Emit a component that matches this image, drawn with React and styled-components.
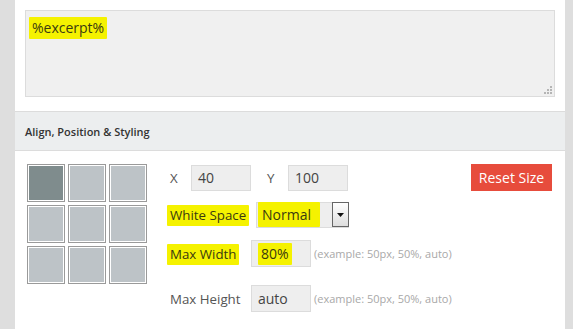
import React from "react";
import styled, { createGlobalStyle } from "styled-components";

const Global = createGlobalStyle`
  html, body { margin: 0; padding: 0; background: #dedede; }
  body { font-family: "Open Sans", "Liberation Sans", sans-serif; font-size: 13px; color: #555; }
`;

const Page = styled.div`
  display: flex;
  width: 573px;
  height: 329px;
  overflow: hidden;
  background: #dedede;
`;

const Panel = styled.div`
  margin-left: 15px;
  width: 550px;
  background: #fff;
  display: flex;
  flex-direction: column;
`;

const TextWrap = styled.div`
  padding: 10px 10px 14px 10px;
`;

const TextBox = styled.div`
  position: relative;
  height: 87px;
  background: #f0f0f0;
  border: 1px solid #dcdcdc;
  padding: 7px 3px;
  box-sizing: border-box;
  font-size: 14px;
  color: #333;
`;

const Grip = styled.svg`
  position: absolute;
  right: 2px;
  bottom: 2px;
`;

const Mark = styled.span`
  background: #f5f200;
  padding: 1px 3px 2px 3px;
  border-radius: 1px;
  color: #3a3a10;
`;

const Header = styled.div`
  height: 38px;
  border-top: 1px solid #dcdcdc;
  border-bottom: 1px solid #dcdcdc;
  background: #eceeef;
  display: flex;
  align-items: center;
  padding-left: 10px;
  font-size: 11px;
  font-weight: 600;
  color: #333;
`;

const Body = styled.div`
  display: flex;
  padding: 13px 13px 0 12px;
  gap: 20px;
`;

const Grid = styled.div`
  display: grid;
  grid-template-columns: repeat(3, 38px);
  grid-auto-rows: 38px;
  gap: 3px;
  align-self: flex-start;
`;

const Cell = styled.div`
  box-sizing: border-box;
  border: 1px solid #9a9a9a;
  box-shadow: inset 0 0 0 1px #fff;
  background: ${(p) => (p.$active ? "#7f8c8d" : "#bdc3c7")};
`;

const Controls = styled.div`
  flex: 1;
  display: flex;
  flex-direction: column;
`;

const Row = styled.div`
  display: flex;
  align-items: center;
  height: 27px;
  margin-top: ${(p) => p.$mt || 0}px;
`;

const Label = styled.span`
  width: ${(p) => p.$w}px;
  flex: none;
  padding-left: 3px;
  box-sizing: border-box;
  white-space: nowrap;
  font-size: 13.3px;
  & > span { margin-left: -3px; }
`;

const Input = styled.div`
  width: 60px;
  height: ${(p) => p.$h || 26}px;
  box-sizing: border-box;
  background: #eeeeee;
  border: 1px solid #dcdcdc;
  display: flex;
  align-items: center;
  padding-left: 6px;
  font-size: 14px;
  color: #444;
  flex: none;
`;

const Gap = styled.span`
  width: ${(p) => p.$w}px;
  flex: none;
`;

const Hint = styled.span`
  margin-left: 3px;
  font-size: 11px;
  color: #a8a8a8;
  white-space: nowrap;
`;

const Select = styled.div`
  width: 93px;
  height: 26px;
  box-sizing: border-box;
  border: 1px solid #dcdcdc;
  background: #eeeeee;
  display: flex;
  align-items: center;
  padding-left: 1px;
  font-size: 14px;
`;

const SelectText = styled.span`
  flex: 1;
  & > span { padding: 3px 9px 3px 4px; }
`;

const DropBtn = styled.div`
  width: 17px;
  height: 25px;
  box-sizing: border-box;
  border: 1px solid #666;
  background: linear-gradient(#ffffff, #dedede);
  display: flex;
  align-items: center;
  justify-content: center;
  margin-right: -1px;
`;

const ResetButton = styled.button`
  margin-left: auto;
  width: 81px;
  height: 27px;
  border: none;
  background: #e74c3c;
  color: #fff;
  font-family: "Open Sans", "Liberation Sans", sans-serif;
  font-size: 14px;
  padding: 0;
  cursor: pointer;
`;

export default function App() {
  return (
    <>
      <Global />
      <Page>
        <Panel>
          <TextWrap>
            <TextBox>
              <Mark>%excerpt%</Mark>
              <Grip width="8" height="8" viewBox="0 0 8 8">
                <g fill="#b5b5b5">
                  <rect x="6" y="0" width="2" height="2" />
                  <rect x="3" y="3" width="2" height="2" />
                  <rect x="6" y="3" width="2" height="2" />
                  <rect x="0" y="6" width="2" height="2" />
                  <rect x="3" y="6" width="2" height="2" />
                  <rect x="6" y="6" width="2" height="2" />
                </g>
              </Grip>
            </TextBox>
          </TextWrap>
          <Header>Align, Position &amp; Styling</Header>
          <Body>
            <Grid>
              {Array.from({ length: 9 }).map((_, i) => (
                <Cell key={i} $active={i === 0} />
              ))}
            </Grid>
            <Controls>
              <Row>
                <Label $w={24}>X</Label>
                <Input>40</Input>
                <Gap $w={13} />
                <Label $w={24}>Y</Label>
                <Input>100</Input>
                <ResetButton>Reset Size</ResetButton>
              </Row>
              <Row $mt={10}>
                <Label $w={89}>
                  <Mark>White Space</Mark>
                </Label>
                <Select>
                  <SelectText>
                    <Mark>Normal</Mark>
                  </SelectText>
                  <DropBtn>
                    <svg width="7" height="4" viewBox="0 0 7 4">
                      <path d="M0 0 H7 L3.5 4 Z" fill="#111" />
                    </svg>
                  </DropBtn>
                </Select>
              </Row>
              <Row $mt={12}>
                <Label $w={84}>
                  <Mark>Max Width</Mark>
                </Label>
                <Input $h={27}>
                  <Mark>80%</Mark>
                </Input>
                <Hint>(example: 50px, 50%, auto)</Hint>
              </Row>
              <Row $mt={18}>
                <Label $w={84}>Max Height</Label>
                <Input $h={27}>auto</Input>
                <Hint>(example: 50px, 50%, auto)</Hint>
              </Row>
            </Controls>
          </Body>
        </Panel>
      </Page>
    </>
  );
}
